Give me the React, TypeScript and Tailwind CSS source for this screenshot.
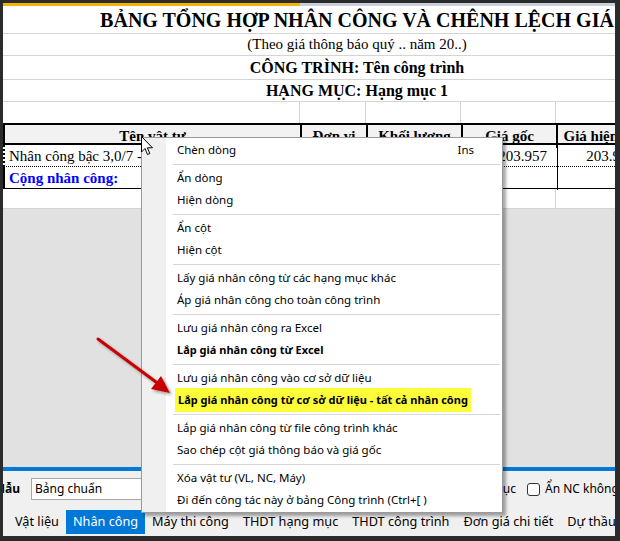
import React from "react";

const ui = { fontFamily: '"Noto Sans", "Open Sans", Arial, sans-serif' };
const serif = { fontFamily: '"Liberation Serif", "Times New Roman", serif' };

type Item = { label: string; bold?: boolean; shortcut?: string; highlight?: boolean } | "sep";

const items: Item[] = [
  { label: "Chèn dòng", shortcut: "Ins" },
  "sep",
  { label: "Ẩn dòng" },
  { label: "Hiện dòng" },
  "sep",
  { label: "Ẩn cột" },
  { label: "Hiện cột" },
  "sep",
  { label: "Lấy giá nhân công từ các hạng mục khác" },
  { label: "Áp giá nhân công cho toàn công trình" },
  "sep",
  { label: "Lưu giá nhân công ra Excel" },
  { label: "Lắp giá nhân công từ Excel", bold: true },
  "sep",
  { label: "Lưu giá nhân công vào cơ sở dữ liệu" },
  { label: "Lắp giá nhân công từ cơ sở dữ liệu - tất cả nhân công", bold: true, highlight: true },
  "sep",
  { label: "Lắp giá nhân công từ file công trình khác" },
  { label: "Sao chép cột giá thông báo và giá gốc" },
  "sep",
  { label: "Xóa vật tư (VL, NC, Máy)" },
  { label: "Đi đến công tác này ở bảng Công trình (Ctrl+[ )" },
];

const tabs = ["Vật liệu", "Nhân công", "Máy thi công", "THDT hạng mục", "THDT công trình", "Đơn giá chi tiết", "Dự thầu"];

function ContextMenu() {
  return (
    <div
      className="absolute left-[141px] top-[137px] w-[362px] border border-[#9a9a9a] bg-white py-px shadow-[3px_3px_3px_rgba(0,0,0,0.35)]"
      style={ui}
    >
      <div className="absolute left-0 top-0 bottom-0 w-[24px] bg-[#f0f0f0]" />
      <div className="relative flex flex-col">
        {items.map((it, i) =>
          it === "sep" ? (
            <div key={i} className="h-[6px] flex items-center pl-[31px] pr-[2px]">
              <div className="h-px w-full bg-[#d5d5d5]" />
            </div>
          ) : (
            <div key={i} className="h-[22px] flex items-center pl-[35px] pr-[28px] text-[11.5px] text-black whitespace-nowrap">
              <span
                className={
                  (it.bold ? "font-bold text-[11px] " : "") +
                  (it.highlight ? "bg-[#fcfc3a] -ml-[2px] px-[3px] py-[4px] leading-[16px] " : "")
                }
              >
                {it.label}
              </span>
              {it.shortcut && <span className="ml-auto">{it.shortcut}</span>}
            </div>
          )
        )}
      </div>
    </div>
  );
}

function Cursor() {
  return (
    <svg className="absolute left-[141px] top-[136px]" width="13" height="20" viewBox="0 0 13 20">
      <path d="M0.5 0.5 L0.5 16 L4 12.5 L6.5 18.5 L8.8 17.5 L6.4 11.8 L11.5 11.8 Z" fill="white" stroke="black" strokeWidth="1" strokeLinejoin="miter" />
    </svg>
  );
}

function RedArrow() {
  return (
    <svg className="absolute left-0 top-0 pointer-events-none" width="620" height="541" viewBox="0 0 620 541">
      <defs>
        <filter id="sh" x="-20%" y="-20%" width="140%" height="140%">
          <feDropShadow dx="2" dy="2" stdDeviation="1.5" floodColor="#000" floodOpacity="0.35" />
        </filter>
      </defs>
      <g filter="url(#sh)">
        <line x1="98" y1="339" x2="156" y2="382" stroke="#c80000" strokeWidth="3" strokeLinecap="round" />
        <path d="M170 393 L151 389 L161 376 Z" fill="#c80000" />
      </g>
    </svg>
  );
}

function Sheet() {
  const cols = "grid grid-cols-[297px_66px_95px_95px_88px_67px]";
  return (
    <div className="w-[708px] bg-white text-black" style={serif}>
      <div className="h-[28px] border-b border-[#d4d4d4] flex items-center justify-center text-[20px] font-bold">
        BẢNG TỔNG HỢP NHÂN CÔNG VÀ CHÊNH LỆCH GIÁ
      </div>
      <div className="h-[22px] border-b border-[#d4d4d4] flex items-center justify-center text-[15px]">
        (Theo giá thông báo quý .. năm 20..)
      </div>
      <div className="h-[24px] border-b border-[#d4d4d4] flex items-center justify-center text-[16px] font-bold">
        CÔNG TRÌNH: Tên công trình
      </div>
      <div className="h-[22px] border-b border-[#d4d4d4] flex items-center justify-center text-[16px] font-bold">
        HẠNG MỤC: Hạng mục 1
      </div>
      <div className={cols + " h-[21px]"}>
        {[0, 1, 2, 3, 4, 5].map((i) => (
          <div key={i} className="border-r border-[#d4d4d4]" />
        ))}
      </div>
      <div className={cols + " h-[22px] border-t-2 border-b-2 border-l-2 border-black bg-[#f2f2f2] text-[15px] font-bold"}>
        <div className="border-r-2 border-black flex items-center justify-center">Tên vật tư</div>
        <div className="border-r-2 border-black flex items-center justify-center">Đơn vị</div>
        <div className="border-r-2 border-black flex items-center justify-center">Khối lượng</div>
        <div className="border-r-2 border-black flex items-center justify-center">Giá gốc</div>
        <div className="border-r-2 border-black flex items-center justify-center whitespace-nowrap">Giá hiện tại</div>
        <div className="border-r-2 border-black flex items-center justify-center whitespace-nowrap">Chênh lệch</div>
      </div>
      <div className={cols + " h-[22px] border-l-2 border-black border-b border-b-black border-dotted text-[15px]"}>
        <div className="border-r border-black border-solid flex items-center pl-[4px] whitespace-nowrap overflow-hidden">Nhân công bậc 3,0/7 - Nhóm 1</div>
        <div className="border-r border-black border-solid flex items-center justify-center">công</div>
        <div className="border-r border-black border-solid flex items-center justify-end pr-[10px]">1,000</div>
        <div className="border-r border-black border-solid flex items-center justify-end pr-[10px]">203.957</div>
        <div className="border-r border-black border-solid flex items-center justify-end pr-[10px]">203.957</div>
        <div className="border-r border-black border-solid flex items-center justify-end pr-[10px]">0</div>
      </div>
      <div className={cols + " h-[22px] border-l-2 border-black border-b text-[15px]"}>
        <div className="border-r border-black flex items-center pl-[4px] font-bold text-[#0000ff] whitespace-nowrap">Cộng nhân công:</div>
        <div className="border-r border-black" />
        <div className="border-r border-black" />
        <div className="border-r border-black" />
        <div className="border-r border-black" />
        <div className="border-r border-black" />
      </div>
      <div className={cols + " h-[20px] border-b border-[#d4d4d4]"}>
        {[0, 1, 2, 3, 4, 5].map((i) => (
          <div key={i} className={i === 0 ? "" : "border-r border-[#d4d4d4]"} />
        ))}
      </div>
    </div>
  );
}

export default function App() {
  return (
    <div className="relative w-[620px] h-[541px] bg-[#2b2b2b] pl-[3px] pt-[3px] pr-[5px] pb-[5px] overflow-hidden">
      <div className="flex flex-col w-full h-full">
        <div className="flex h-[3px] shrink-0">
          <div className="w-[297px] bg-[#f4b400]" />
          <div className="flex-1 bg-[#c9d1dc]" />
        </div>
        <div className="shrink-0 overflow-hidden">
          <Sheet />
        </div>
        <div className="flex-1 bg-[#e1e1e1]" />
        <div className="h-[4px] shrink-0 bg-[#0078d7]" />
        <div className="h-[36px] shrink-0 bg-[#f0f0f0] flex items-center text-[12px] text-black whitespace-nowrap overflow-hidden" style={ui}>
          <div className="w-[17px] shrink-0 overflow-hidden flex justify-end font-bold">Mẫu</div>
          <div className="ml-[11px] shrink-0 h-[22px] w-[280px] border border-[#a8a8a8] bg-white flex items-center pl-[3px]">Bảng chuẩn</div>
          <div className="w-[205px] shrink-0 flex justify-end">Đánh dấu mục</div>
          <span className="ml-[11px] shrink-0 inline-block h-[13px] w-[13px] rounded-[3px] border border-[#333] bg-white" />
          <span className="ml-[5px] shrink-0">Ẩn NC không chênh lệch</span>
        </div>
        <div className="h-[29px] shrink-0 bg-[#f0f0f0] flex items-center pl-[5px] text-[12.7px] text-black whitespace-nowrap overflow-hidden" style={ui}>
          {tabs.map((t) => (
            <div
              key={t}
              className={
                "h-[24px] shrink-0 flex items-center px-[7px] " + (t === "Nhân công" ? "bg-[#0078d7] text-white" : "")
              }
            >
              {t}
            </div>
          ))}
        </div>
      </div>
      <ContextMenu />
      <Cursor />
      <RedArrow />
    </div>
  );
}
